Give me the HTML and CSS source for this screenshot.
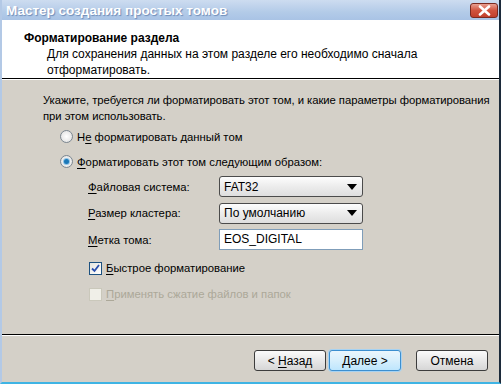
FILE: index.html
```html
<!DOCTYPE html>
<html lang="ru">
<head>
    <meta charset="UTF-8">
    <title>Мастер создания простых томов</title>
    <link rel="stylesheet" href="styles.css">
</head>
<body>
<div class="window">
	<div class="title-bar">
		<span class="title-text">Мастер создания простых томов</span>
		<span class="close-btn">
			<svg width="13" height="11" viewBox="0 0 13 11"><path d="M2 1.5 L11 9.5 M11 1.5 L2 9.5" stroke="#fff" stroke-width="2.6" stroke-linecap="round"/></svg>
		</span>
	</div>
	<div class="header">
		<div class="header-title">Форматирование раздела</div>
		<div class="header-desc">Для сохранения данных на этом разделе его необходимо сначала отформатировать.</div>
	</div>
	<div class="content">
		<p class="intro">Укажите, требуется ли форматировать этот том, и какие параметры форматирования при этом использовать.</p>
		<label class="radio-row">
			<span class="radio"></span>
			<span>Н<u>е</u> форматировать данный том</span>
		</label>
		<label class="radio-row">
			<span class="radio checked"></span>
			<span><u>Ф</u>орматировать этот том следующим образом:</span>
		</label>
		<div class="fields">
			<span class="field-label"><u>Ф</u>айловая система:</span>
			<div class="select"><span>FAT32</span><span class="arrow"></span></div>
			<span class="field-label"><u>Р</u>азмер кластера:</span>
			<div class="select"><span>По умолчанию</span><span class="arrow"></span></div>
			<span class="field-label"><u>М</u>етка тома:</span>
			<div class="text-input">EOS_DIGITAL</div>
		</div>
		<label class="check-row">
			<span class="checkbox checked">
				<svg width="9" height="9" viewBox="0 0 9 9"><path d="M1 4.5 L3.5 7 L8 1" fill="none" stroke="#2a4fae" stroke-width="1.8"/></svg>
			</span>
			<span><u>Б</u>ыстрое форматирование</span>
		</label>
		<label class="check-row disabled">
			<span class="checkbox"></span>
			<span><u>П</u>рименять сжатие файлов и папок</span>
		</label>
	</div>
	<div class="footer">
		<button class="btn">&lt; <u>Н</u>азад</button>
		<button class="btn default"><u>Д</u>алее &gt;</button>
		<button class="btn cancel">Отмена</button>
	</div>
</div>
</body>
</html>
```

FILE: styles.css
```css
*{
	padding:0;margin:0;box-sizing:border-box;
}
body{font-family:Tahoma,'Liberation Sans',sans-serif;font-size:12px;color:#000;background:#d4d0c8;}
u{text-decoration:underline;text-underline-offset:2px;}

.window{
	width:501px;
	height:384px;
	display:flex;
	flex-direction:column;
	background:#d4d0c8;
	border-left:2px solid #b3c9e6;
	border-right:2px solid #1c2a3a;
	border-bottom:2px solid #3fb4e4;
}
.title-bar{
	height:20px;
	display:flex;
	justify-content:space-between;
	align-items:center;
	padding:0 1px 0 4px;
	background:linear-gradient(#cddcf0,#b3cbe8 60%,#a9c3e5);
}
.title-text{
	color:#fff;
	font-weight:bold;
	font-size:13.5px;
	text-shadow:1px 1px 1px #6d8cb8;
}
.close-btn{
	width:28px;height:15px;
	display:flex;align-items:center;justify-content:center;
	border:1px solid #7a2a20;
	border-radius:3px;
	background:linear-gradient(#e9a092,#d0533e 50%,#c2402d);
}

.header{
	height:59px;
	flex:none;
	background:#fff;
	padding:10px 0 0 22px;
	border-bottom:1px solid #000;
	box-shadow:0 1px 0 #fff;
}
.header-title{font-weight:bold;font-size:12px;line-height:16px;}
.header-desc{padding:0 40px 0 23px;line-height:16px;}

.content{
	flex:1;
	padding:13px 0 0 41px;
	font-size:11.3px;
}
.intro{line-height:16px;letter-spacing:-0.05px;}

.radio-row{
	display:flex;
	align-items:center;
	gap:4px;
	margin:2px 0 0 17px;
	height:21px;
}
.radio-row + .radio-row{margin-top:4px;}
.radio{
	width:13px;height:13px;
	border-radius:50%;
	border:1px solid #7b8690;
	background:radial-gradient(#fff,#dcdcdc);
	display:flex;align-items:center;justify-content:center;
}
.radio.checked::after{
	content:"";
	width:5px;height:5px;border-radius:50%;
	background:#1b78b8;
	box-shadow:0 0 0 1px #8fc3e6;
}

.fields{
	display:grid;
	grid-template-columns:131px 144px;
	row-gap:5.5px;
	align-items:center;
	margin:4px 0 0 45px;
}
.field-label{line-height:20px;}
.select{
	height:21px;
	display:flex;
	justify-content:space-between;
	align-items:center;
	padding:0 5px 0 4px;
	border:1px solid #4b4b4b;
	border-radius:3px;
	background:linear-gradient(#fdfdfd,#ececec 50%,#dedede);
	font-size:12px;
}
.arrow{
	width:0;height:0;
	border-left:5px solid transparent;
	border-right:5px solid transparent;
	border-top:6px solid #000;
}
.text-input{
	height:21px;
	line-height:19px;
	padding:0 4px;
	border:1px solid #7f9db9;
	background:#fff;
	font-size:12px;
}

.check-row{
	display:flex;
	align-items:center;
	gap:4px;
	margin:9px 0 0 46px;
	height:18px;
}
.check-row + .check-row{margin-top:8px;}
.checkbox{
	width:13px;height:13px;
	border:1px solid #1c5180;
	background:linear-gradient(135deg,#e6e6e0,#fff);
	display:flex;align-items:center;justify-content:center;
}
.check-row.disabled{color:#aca899;}
.check-row.disabled .checkbox{border-color:#cac8bb;background:#f0efe8;}

.footer{
	height:48px;
	flex:none;
	display:flex;
	align-items:flex-start;
	padding:15px 11px 0 252px;
	border-top:1px solid #000;
	box-shadow:inset 0 1px 0 #fff;
}
.btn{
	width:73px;height:21px;
	font-family:inherit;font-size:12px;
	border:1px solid #3c3c3c;
	border-radius:3px;
	background:linear-gradient(#fbfbfb,#e8e8e8 50%,#d6d6d6);
	margin-right:3px;
}
.btn.default{
	border-color:#3c8fd0;
	box-shadow:0 0 0 1px #a6d2f2;
	background:linear-gradient(#eaf6fd,#d7effc 50%,#bee6fd);
}
.btn.cancel{margin-left:12px;margin-right:0;}
```
